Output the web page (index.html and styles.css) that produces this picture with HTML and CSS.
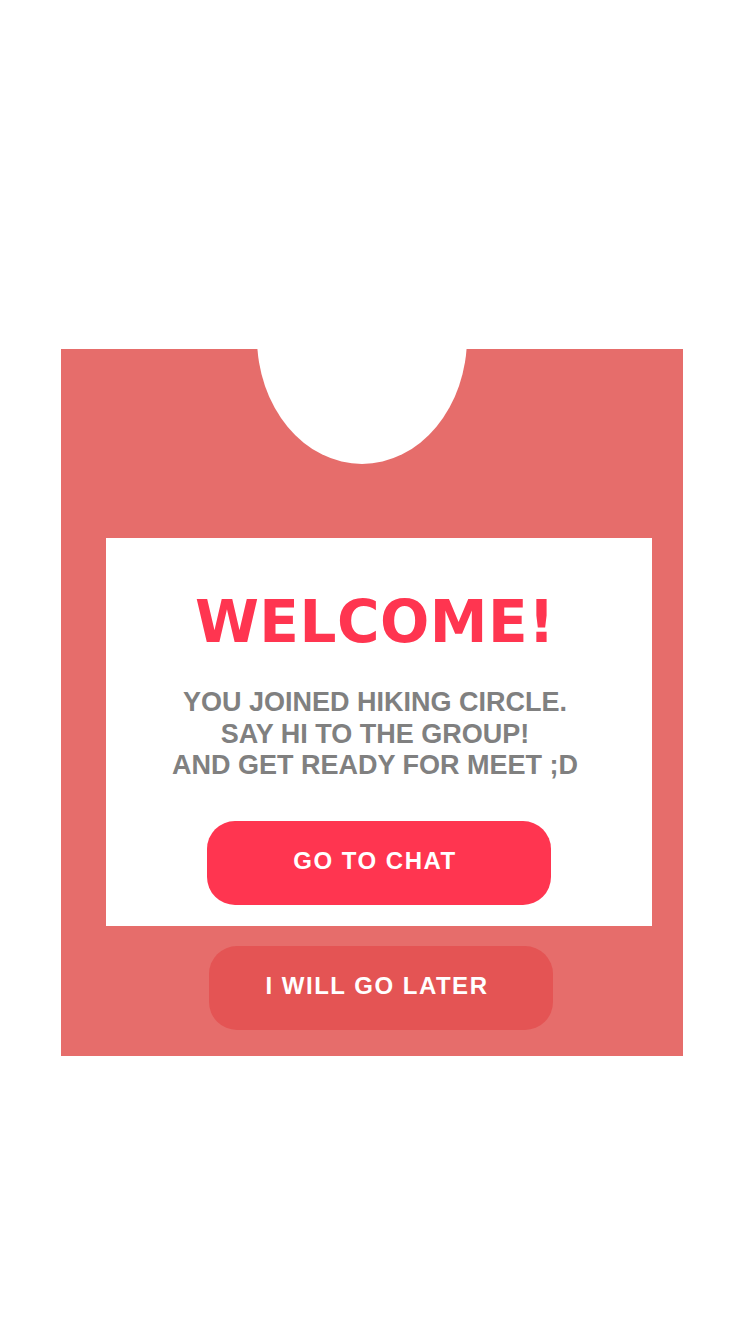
FILE: index.html
```html
<!DOCTYPE html>
<html lang="en">
<head>
<meta charset="utf-8">
<title>Welcome</title>
<link rel="stylesheet" href="styles.css">
</head>
<body>
<main class="page">
  <section class="card">
    <div class="notch"></div>
    <div class="panel">
      <h1 class="title">WELCOME!</h1>
      <p class="message">YOU JOINED HIKING CIRCLE.<br>SAY HI TO THE GROUP!<br>AND GET READY FOR MEET ;D</p>
      <button class="btn btn-primary" type="button">GO TO CHAT</button>
    </div>
    <button class="btn btn-secondary" type="button">I WILL GO LATER</button>
  </section>
</main>
</body>
</html>
```
FILE: styles.css
```css
html, body {
  margin: 0;
  padding: 0;
  background: #ffffff;
}

body {
  font-family: "Liberation Sans", Arial, sans-serif;
  width: 750px;
  height: 1334px;
}

.page {
  padding: 349px 0 0 61px;
}

.card {
  position: relative;
  overflow: hidden;
  width: 622px;
  height: 707px;
  box-sizing: border-box;
  background: #e66d6b;
  padding: 189px 31px 0 45px;
  display: flex;
  flex-direction: column;
  align-items: flex-start;
}

.notch {
  position: absolute;
  left: 196px;
  top: -138px;
  width: 210px;
  height: 253px;
  border-radius: 50%;
  background: #ffffff;
}

.panel {
  width: 546px;
  height: 388px;
  box-sizing: border-box;
  background: #ffffff;
  padding-top: 55px;
  display: flex;
  flex-direction: column;
  align-items: center;
}

.title {
  margin: 0 0 0 -8px;
  font-family: "DejaVu Sans", "Liberation Sans", sans-serif;
  font-size: 58px;
  line-height: 59px;
  font-weight: 700;
  letter-spacing: 0.5px;
  color: #ff3550;
}

.message {
  margin: 35px 0 0 -8px;
  font-size: 27px;
  line-height: 31.5px;
  font-weight: 700;
  color: #808080;
  text-align: center;
}

.btn {
  border: none;
  width: 344px;
  height: 84px;
  border-radius: 28px;
  font-family: "Liberation Sans", Arial, sans-serif;
  font-weight: 700;
  font-size: 24px;
  letter-spacing: 1.5px;
  color: #ffffff;
  padding: 0 0 4px 0;
  display: flex;
  align-items: center;
  justify-content: center;
}

.btn-primary {
  margin-top: 39px;
  margin-left: 0;
  background: #ff3550;
  text-indent: -8px;
}

.btn-secondary {
  margin-top: 20px;
  margin-left: 103px;
  background: #e45454;
  text-indent: -8px;
}
```
